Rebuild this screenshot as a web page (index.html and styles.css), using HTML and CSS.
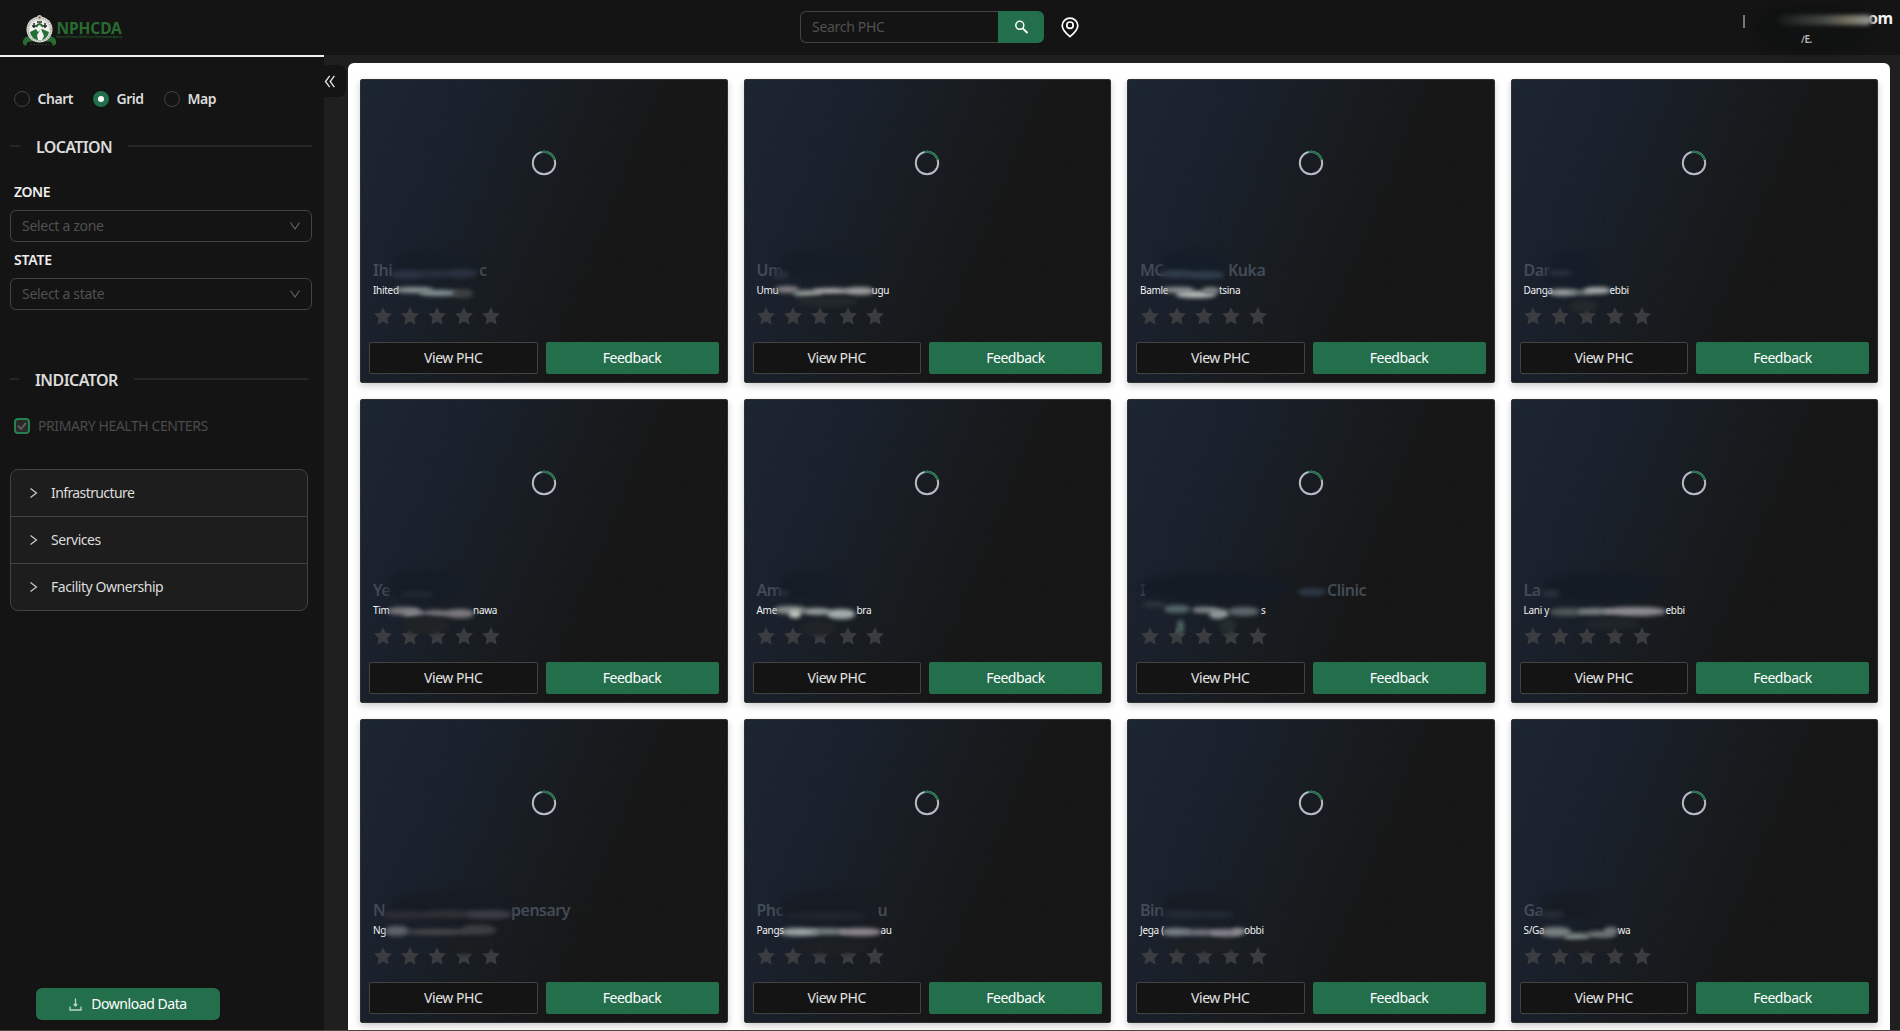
FILE: index.html
```html
<!DOCTYPE html>
<html lang="en">
<head>
<meta charset="utf-8">
<title>NPHCDA</title>
<link rel="stylesheet" href="styles.css">
</head>
<body>
<header class="topbar">
  <div class="brand">
    <svg class="crest" width="35" height="34" viewBox="0 0 35 34">
      <path d="M1 30Q0 23 7 22L11 28Q5 26 4 32ZM34 30Q35 23 28 22L24 28Q30 26 31 32Z" fill="#286c32"/>
      <circle cx="17.5" cy="15.5" r="13" fill="#deded9"/>
      <circle cx="17.5" cy="15.5" r="11.6" fill="none" stroke="#777" stroke-dasharray="1 1.3"/>
      <circle cx="17.5" cy="16" r="9.6" fill="#f2f3ee"/>
      <path d="M8 18L14 15L16 18L20 15L27 18A9.6 9.6 0 0 1 8 18" fill="#257037"/>
      <path d="M16 26L15 21L19 15L22 22L20 26Z" fill="#f2f3ee"/>
      <path d="M10 12h5M12 9v5M20 12h5M23 9v5M15 8h5" stroke="#292929" stroke-width="1.5"/>
      <path d="M14 13Q17.5 7 21 13" fill="none" stroke="#257037" stroke-width="2"/>
      <circle cx="17.5" cy="3.4" r="2.5" fill="#c6c2bb"/><circle cx="17.5" cy="3.4" r="1" fill="#8d5148"/>
      <path d="M8 30.5h19" stroke="#333" stroke-width="1" stroke-dasharray="2 1"/>
    </svg>
    <div class="brand-name"><b>NPHCDA</b><small>National Primary Health Care Development Agency</small></div>
  </div>
  <div class="search">
    <div class="search-input">Search PHC</div>
    <div class="search-btn"><svg width="15" height="15" viewBox="0 0 15 15" fill="none" stroke="#fff" stroke-width="1.5"><circle cx="5.8" cy="5.3" r="4"/><path d="M8.8 8.3L13.5 13" stroke-width="1.8"/></svg></div>
    <svg class="pin" width="18" height="21" viewBox="0 0 18 21" fill="none" stroke="#fff" stroke-width="1.7"><path d="M9 19.6Q1.2 13.4 1.2 8.5A7.8 7.4 0 0 1 16.8 8.5Q16.8 13.4 9 19.6Z"/><circle cx="9" cy="8.2" r="3.2"/></svg>
  </div>
  <div class="account">
    <span class="acc-mail">om</span>
    <i class="acc-bar"></i><i class="acc-shade"></i><i class="acc-smear"></i>
    <span class="acc-role">&#8725;E.</span>
  </div>
</header>
<div class="shell">
  <aside class="sidebar">
    <div class="radios">
      <span class="radio"><i></i>Chart</span><span class="radio on"><i></i>Grid</span><span class="radio"><i></i>Map</span>
    </div>
    <div class="divider loc"><span>LOCATION</span></div>
    <div class="field-label zone">ZONE</div>
    <div class="select">Select a zone<svg width="12" height="10" viewBox="0 0 12 10"><path d="M1.5 1.5L6 8L10.5 1.5"/></svg></div>
    <div class="field-label state">STATE</div>
    <div class="select">Select a state<svg width="12" height="10" viewBox="0 0 12 10"><path d="M1.5 1.5L6 8L10.5 1.5"/></svg></div>
    <div class="divider ind"><span>INDICATOR</span></div>
    <div class="check"><svg width="16" height="16" viewBox="0 0 16 16"><rect x="1" y="1" width="14" height="14" rx="3" fill="#292929" stroke="#25804f" stroke-width="2"/><path d="M4 7.8L7 11L12 5" fill="none" stroke="#5b5b5b" stroke-width="2"/></svg><span>PRIMARY HEALTH CENTERS</span></div>
    <div class="accordion">
      <div><svg width="9" height="12" viewBox="0 0 9 12"><path d="M1.5 1.5L7.5 6L1.5 10.5"/></svg><span class="tight">Infrastructure</span></div>
      <div><svg width="9" height="12" viewBox="0 0 9 12"><path d="M1.5 1.5L7.5 6L1.5 10.5"/></svg><span>Services</span></div>
      <div><svg width="9" height="12" viewBox="0 0 9 12"><path d="M1.5 1.5L7.5 6L1.5 10.5"/></svg><span>Facility Ownership</span></div>
    </div>
    <div class="download"><svg width="13" height="13" viewBox="0 0 13 13" fill="none" stroke="#b9d6c6"><path d="M6.5 .5V8M4.7 6L6.5 8L8.3 6M1 8.5V12H12V8.5" stroke-width="1.3"/></svg><span>Download Data</span></div>
  </aside>
  <div class="toggle"><svg width="12" height="13" viewBox="0 0 12 13" fill="none" stroke="#ddd" stroke-width="1.4"><path d="M5.7 .8L1.5 6.5L5.7 12.2M10.4 .8L6.2 6.5L10.4 12.2"/></svg></div>
  <main class="panel" id="grid"></main>
</div>
<script src="cards.js"></script>
</body>
</html>
```
FILE: cards.js
```js
// title: [start, end, x of end], place: same; marks: [x, y, width, height, colour] smears over the text
const cards = [
  [['Ihi','c',106],['Ihited','',0],[[20,-11,86,26,'#171d26'],[18,8,34,9,'#2b3242'],[46,8,30,8,'#282e3d'],[72,7,32,9,'#2b3140'],[22,25,38,6,'#8b9596'],[46,28,40,6,'#879596'],[80,27,20,9,'#3d4141']]],
  [['Um','',0],['Umu','ugu',115],[[20,-12,94,30,'#171d26'],[16,9,16,8,'#292f3b'],[18,24,24,7,'#817f82'],[36,28,30,7,'#8d9593'],[56,26,36,6,'#a5a7a6'],[88,25,29,8,'#9b9c9e'],[40,34,60,11,'#24282b']]],
  [['MC','Kuka',88],['Bamle','tsina',79],[[22,-13,60,30,'#151d28'],[20,8,34,8,'#313d4b'],[48,9,36,8,'#303d4b'],[22,25,32,6,'#8a9190'],[36,29,40,7,'#b6bbb9'],[62,25,18,7,'#7c8384']]],
  [['Dar','',0],['Danga','ebbi',86],[[24,-12,52,46,'#151d28'],[24,8,24,6,'#27303d'],[25,27,28,7,'#969e9f'],[46,28,24,5,'#727a7b'],[60,25,27,7,'#a4aaa8'],[46,38,28,12,'#25292b']]],
  [['Ye','',0],['Tim','nawa',100],[[14,-12,76,32,'#161c25'],[28,9,34,7,'#202733'],[15,25,32,8,'#77787b'],[30,28,22,7,'#85868b'],[50,28,28,7,'#74767b'],[73,27,28,9,'#7d787d'],[30,34,46,18,'#202326']]],
  [['Am','',0],['Ame','bra',100],[[22,-10,70,28,'#161c25'],[20,8,12,6,'#272e39'],[17,24,32,8,'#878f8d'],[32,28,12,8,'#c2c6bc'],[46,26,28,7,'#969d9b'],[70,27,28,10,'#a3adac'],[44,38,34,16,'#202427']]],
  [['I','Clinic',187],['','s',121],[[0,-9,150,29,'#151b25'],[158,6,28,8,'#2b3746'],[2,20,24,5,'#33383d'],[24,23,26,8,'#536668'],[37,38,7,14,'#4e6765'],[52,25,26,6,'#81898b'],[69,27,20,10,'#8d9999'],[88,25,31,9,'#5c666a'],[80,36,16,16,'#252d30']]],
  [['La','',0],['Lani y','ebbi',142],[[20,-9,114,29,'#151b25'],[18,8,18,7,'#29313c'],[26,26,36,8,'#4e5759'],[54,26,34,7,'#797f82'],[80,25,62,9,'#8c8b91'],[60,36,55,12,'#20252a']]],
  [['N','pensary',138],['Ng','',0],[[18,-11,118,28,'#171c24'],[10,9,50,8,'#2c2d34'],[51,8,52,8,'#2f3036'],[93,8,46,9,'#3c3c44'],[12,24,24,10,'#5e6169'],[32,27,66,6,'#45464a'],[88,23,35,10,'#3c3d43'],[70,36,50,16,'#1a1d20']]],
  [['Phc','u',121],['Pangs','au',124],[[23,-12,90,34,'#171c24'],[30,10,80,8,'#20252e'],[23,26,40,8,'#9ca4a5'],[54,26,36,7,'#727b7e'],[82,26,42,8,'#8e878e'],[40,38,70,14,'#1d2023']]],
  [['Bin','',0],['Jega (','obbi',104],[[22,-10,74,28,'#171c24'],[24,8,38,9,'#232a35'],[54,9,40,7,'#232a33'],[22,26,29,8,'#787f84'],[44,27,34,7,'#6e717a'],[70,27,30,8,'#85818a'],[92,26,14,7,'#8c8b90'],[30,38,70,12,'#1d2023']]],
  [['Ga','',0],['S/Ga','wa',94],[[18,-10,60,28,'#171c24'],[18,9,22,7,'#272d37'],[17,25,30,10,'#777e7e'],[40,31,26,8,'#7c8483'],[62,29,29,7,'#6e7475'],[80,25,14,8,'#72777a'],[34,38,56,12,'#1d2023']]]
];
const star = '<svg width="18" height="18" viewBox="0 0 18 18"><path d="M9 0L11.7 5.8L18 6.6L13.4 11L14.6 17.5L9 14.4L3.4 17.5L4.6 11L0 6.6L6.3 5.8Z"/></svg>';
const line = (cls, [a, b, x]) => `<div class="${cls}"><span style="width:${x}px">${a}</span><span>${b}</span></div>`;
document.getElementById('grid').innerHTML = cards.map(([title, place, marks]) => `
<article class="card">
  <div class="media"><svg width="26" height="26" viewBox="0 0 26 26" fill="none" stroke-width="2"><circle cx="13" cy="13" r="11.2" stroke="#b8b9c9"/><path d="M10.5 2.1A11.2 11.2 0 0 1 23.8 10" stroke="#217347"/></svg></div>
  <div class="info">${line('title', title)}${line('place', place)}
    <div class="stars">${star.repeat(5)}</div>
    <div class="smears">${marks.map(([x, y, w, h, c]) => `<i style="left:${x}px;top:${y}px;width:${w}px;height:${h}px;background:${c}"></i>`).join('')}</div>
  </div>
  <div class="actions"><span class="view">View PHC</span><span class="feedback">Feedback</span></div>
</article>`).join('');
```
FILE: styles.css
```css
* { box-sizing: border-box; }
body { margin: 0; height: 1031px; overflow: hidden; background: #1f1f1f; color: #dcdcdc; font: 14px/22px "Noto Sans", "Open Sans", sans-serif; letter-spacing: -.45px; border-bottom: 1px solid #4a4747; }
svg { display: block; flex: none; }
.topbar { position: relative; z-index: 1; height: 55px; background: #141414; display: grid; grid-template-columns: 324px 1fr 200px; }
.brand { height: 57px; border-bottom: 2px solid #f0f0f0; padding: 14px 0 0 21.5px; display: flex; background: #141414; }
.brand-name { color: #286c32; }
.brand-name b { display: block; font-size: 15.5px; line-height: 12px; margin-top: 8px; letter-spacing: -.1px; }
.brand-name small { display: block; font-size: 3px; line-height: 4px; letter-spacing: -.13px; white-space: nowrap; margin-top: 1px; }
.search { display: flex; padding: 11px 0 0 476px; }
.search-input { width: 198px; height: 32px; border: 1px solid #424242; border-right: 0; border-radius: 6px 0 0 6px; padding: 4px 11px; color: #505050; letter-spacing: -.3px; }
.search-btn { width: 46px; height: 32px; background: #236e4b; border-radius: 0 6px 6px 0; padding: 9px 0 0 16px; }
.pin { margin: 6px 0 0 17px; }
.account { position: relative; height: 55px; }
.account > * { position: absolute; }
.acc-bar { left: 43px; top: 15px; width: 2px; height: 13px; background: #777; }
.acc-shade { left: 54px; top: 3px; width: 118px; height: 50px; background: #101111; border-radius: 45%; filter: blur(4px); }
.acc-smear { left: 78px; top: 15px; width: 94px; height: 10px; border-radius: 5px; background: linear-gradient(90deg, #151917, #454a47 50%, #6b6a57 70%, #969b96); filter: blur(2px); }
.acc-mail { left: 168px; top: 7px; font-weight: 700; font-size: 16px; color: #f3f3f3; }
.acc-role { left: 101px; top: 28px; font-size: 10px; font-weight: 600; color: #bbb; }

.shell { display: flex; height: 975px; }
.sidebar { width: 324px; background: #141414; padding: 0 12px 0 10px; display: flex; flex-direction: column; }
.radios { display: flex; height: 22px; margin: 33px 0 0 4px; font-weight: 600; }
.radio { display: flex; gap: 7.5px; align-items: center; width: 79px; }
.radio.on { width: 71px; }
.radio i { width: 16px; height: 16px; border: 1px solid #424242; border-radius: 50%; }
.radio.on i { border: 5px solid #236e4b; background: #fff; }
.divider { display: flex; align-items: center; gap: 16px; height: 24px; font-size: 16px; font-weight: 600; }
.divider::before, .divider::after { content: ""; height: 2px; width: 10px; background: #262626; }
.divider::after { flex: 1; }
.divider span { padding-top: 1px; }
.divider.loc { margin-top: 24px; letter-spacing: -.65px; }
.divider.ind { margin: 57px 4px 0 0; letter-spacing: -.55px; }
.divider.ind::before { width: 9px; }
.field-label { height: 22px; margin-left: 4px; font-weight: 600; color: #eee; }
.zone { margin: 23px 0 7px 4px; }
.state { margin: 7px 0 7px 4px; letter-spacing: -.2px; }
.select { height: 32px; border: 1px solid #424242; border-radius: 6px; padding: 0 10px 0 11px; display: flex; align-items: center; justify-content: space-between; color: #505050; letter-spacing: -.3px; }
.select path { fill: none; stroke: #666; stroke-width: 1.1; }
.check { display: flex; align-items: center; gap: 8px; height: 22px; margin: 24px 0 0 4px; color: #4b4b4b; letter-spacing: -.42px; }
.accordion { width: 298px; height: 142px; margin-top: 32px; border: 1px solid #424242; border-radius: 8px; background: #1d1d1d; }
.accordion div { height: 47px; display: flex; align-items: center; gap: 13px; padding-left: 18px; border-bottom: 1px solid #424242; }
.accordion div:last-child { border: 0; height: 46px; }
.accordion .tight { letter-spacing: -.6px; }
.accordion path { fill: none; stroke: #ccc; stroke-width: 1.2; }
.download { width: 184px; height: 32px; margin: auto 0 10px 26px; background: #236e4b; border-radius: 6px; display: flex; gap: 9px; align-items: center; justify-content: center; color: #fff; }
.toggle { width: 22px; height: 32px; margin-top: 10px; background: #141414; border-radius: 0 8px 8px 0; padding: 10px 0 0; }
.panel { margin: 8px 0 0 2px; width: 1542px; background: #fff; border-radius: 6px 6px 0 0; padding: 16px 12px 0; display: grid; grid-template-columns: repeat(4, 1fr); grid-auto-rows: 304px; gap: 16px; overflow: hidden; }
.card { border: 1px solid #303030; border-radius: 2px; padding: 0 8px; box-shadow: 0 3px 7px #0003; background: url("data:image/svg+xml,%3Csvg xmlns='http://www.w3.org/2000/svg' width='200' height='200'%3E%3Cfilter id='n'%3E%3CfeTurbulence type='fractalNoise' baseFrequency='.85' numOctaves='2' stitchTiles='stitch'/%3E%3CfeColorMatrix type='saturate' values='0'/%3E%3C/filter%3E%3Crect width='200' height='200' filter='url(%23n)' opacity='.06'/%3E%3C/svg%3E"), linear-gradient(112deg, #17202d 0%, #151c28 23%, #13181d 42%, #111111 66%, #111111); }
.media { height: 180px; padding: 70px 0 0 161.5px; }
.info { position: relative; height: 82px; padding-left: 4px; }
.title, .place { display: flex; white-space: nowrap; }
.title span, .place span { flex: none; }
.title { font-size: 16px; line-height: 21px; font-weight: 600; letter-spacing: -.5px; color: #434b57; }
.place { font-size: 10px; line-height: 18px; color: #f2f2f2; letter-spacing: -.3px; }
.stars { display: flex; gap: 9.2px; margin: 8px 0 0 .5px; }
.stars path { fill: #3a3c3f; }
.smears { position: absolute; left: 4px; top: 2px; }
.smears i { position: absolute; border-radius: 45%; filter: blur(2px); }
.smears i:first-child { filter: blur(4px); }
.actions { display: flex; gap: 8px; text-align: center; line-height: 32px; color: #fff; }
.actions span { height: 32px; border-radius: 2px; }
.view { flex: 1; background: #141414; border: 1px solid #424242; line-height: 30px; color: #e2e2e2; }
.feedback { width: 173px; background: #236e4b; }
```
